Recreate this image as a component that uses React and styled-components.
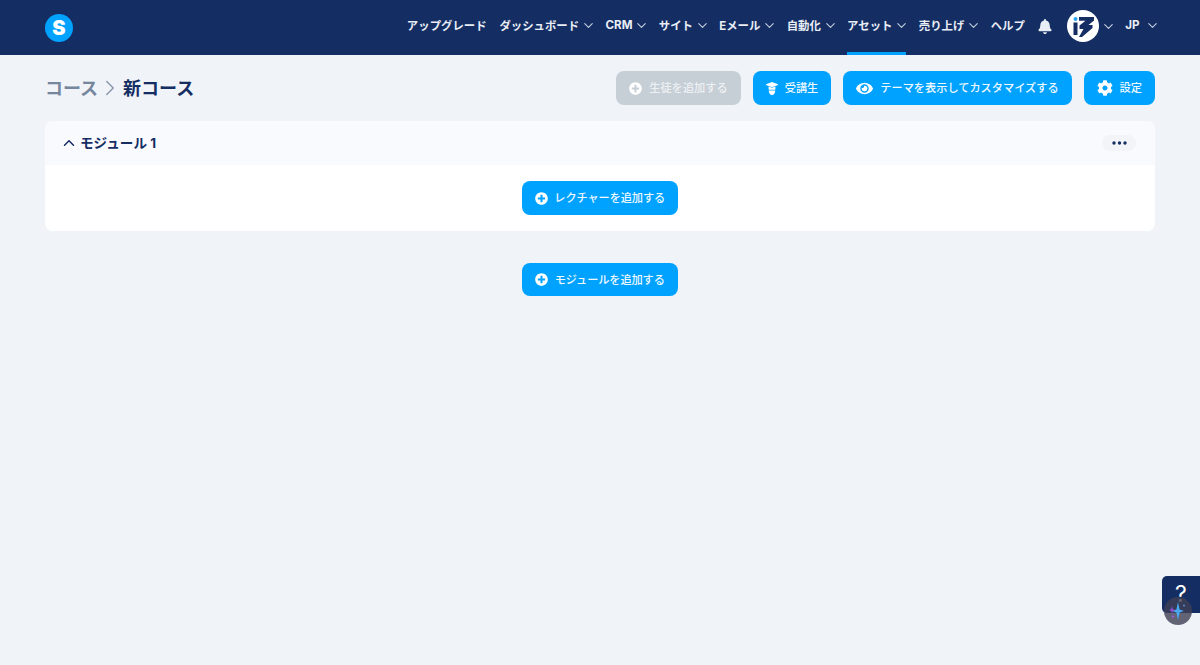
import React from "react";
import styled, { createGlobalStyle } from "styled-components";
import { ChevronDown, ChevronUp, ChevronRight } from "lucide-react";
import { FaBell, FaPlusCircle, FaEye, FaCog } from "react-icons/fa";

const Global = createGlobalStyle`
  html, body { margin: 0; padding: 0; height: 100%; background: #f0f4f9; }
  body { font-family: Inter, "Noto Sans CJK JP", sans-serif; overflow: hidden; }
`;

const Page = styled.div`
  height: 665px;
  position: relative;
  overflow: hidden;
`;

const TopBar = styled.header`
  height: 55px;
  background: #142d63;
  display: flex;
  align-items: center;
  justify-content: space-between;
  padding: 0 44px 0 45px;
`;

const Logo = styled.div`
  width: 28px;
  height: 28px;
  border-radius: 50%;
  background: #00a2ff;
  color: #fff;
  font: 900 20px/28px Inter, sans-serif;
  text-align: center;
`;

const Menu = styled.nav`
  display: flex;
  align-items: center;
  height: 55px;
  gap: 12.8px;
`;

const MenuItem = styled.div`
  height: 55px;
  box-sizing: border-box;
  padding-bottom: 5px;
  display: flex;
  align-items: center;
  gap: 5px;
  color: #e9eef6;
  font-size: ${(p) => (p.$latin ? 11.6 : 11.4)}px;
  font-weight: 700;
  white-space: nowrap;
  box-shadow: ${(p) => (p.$active ? "inset 0 -3px 0 #00a2ff" : "none")};
`;

const Caret = styled(ChevronDown)`
  width: 15px;
  height: 15px;
  margin: 1px -3.5px 0 ${(p) => p.$left ?? -3}px;
  color: #c3cedf;
  stroke-width: 1.8;
`;

const Bell = styled(FaBell)`
  width: 14px;
  height: 15px;
  color: #e9eef6;
  display: block;
  margin-bottom: 3px;
`;

const AvatarRow = styled.div`
  display: flex;
  align-items: center;
  gap: 5px;
  margin: 0 0 3px 2.5px;
`;

const Avatar = styled.svg`
  width: 32px;
  height: 32px;
  display: block;
`;

const Main = styled.main`
  padding: 16px 45px 0;
`;

const TitleRow = styled.div`
  display: flex;
  align-items: center;
  justify-content: space-between;
  height: 34px;
`;

const Crumbs = styled.div`
  display: flex;
  align-items: center;
  height: 34px;
  font-size: 18px;
  font-weight: 700;
`;

const CrumbLink = styled.span`
  color: #76869d;
  margin-top: -3px;
`;

const CrumbCurrent = styled.span`
  color: #142d63;
  margin-top: -3px;
`;

const CrumbArrow = styled(ChevronRight)`
  width: 26px;
  height: 26px;
  margin-left: -1px;
  color: #8897ab;
  stroke-width: 1.3;
`;

const Actions = styled.div`
  display: flex;
  gap: 12px;
`;

const Button = styled.button`
  height: ${(p) => p.$h || 34}px;
  padding: 0 13px 2px;
  border: 0;
  border-radius: 8px;
  background: ${(p) => (p.$disabled ? "#c6ced6" : "#00a2ff")};
  color: ${(p) => (p.$disabled ? "#eef1f4" : "#eef8ff")};
  display: inline-flex;
  align-items: center;
  gap: ${(p) => p.$gap || 7}px;
  font-family: inherit;
  font-size: 11.2px;
  font-weight: 500;
  letter-spacing: ${(p) => (p.$tight ? "-0.1px" : "0")};
  white-space: nowrap;
  svg { color: #fff; flex: none; margin-top: 2px; }
`;

const Module = styled.section`
  margin-top: 16px;
  border-radius: 8px;
  overflow: hidden;
  background: #fff;
`;

const ModuleHead = styled.div`
  height: 44px;
  background: #f9fafd;
  display: flex;
  align-items: center;
  padding: 0 19px 0 15px;
  gap: 2px;
`;

const ModuleTitle = styled.div`
  flex: 1;
  color: #142d63;
  font-size: 13.6px;
  font-weight: 700;
  margin-top: -3px;
`;

const Toggle = styled(ChevronUp)`
  width: 18px;
  height: 18px;
  color: #142d63;
  stroke-width: 2;
`;

const More = styled.div`
  width: 34px;
  height: 16px;
  border-radius: 8px;
  background: #f3f4f7;
  display: flex;
  align-items: center;
  justify-content: center;
`;

const Dots = styled.svg`
  width: 15px;
  height: 4px;
  display: block;
`;

const ModuleBody = styled.div`
  height: 66px;
  display: flex;
  align-items: center;
  justify-content: center;
`;

const AddModule = styled.div`
  margin-top: 32px;
  display: flex;
  justify-content: center;
`;

const HelpTab = styled.div`
  position: absolute;
  right: 0;
  top: 576px;
  width: 38px;
  height: 37px;
  background: #142d63;
  border-radius: 5px 0 0 5px;
  color: #fff;
  font: 400 23px/37px Inter, sans-serif;
  text-align: center;
`;

const Assistant = styled.div`
  position: absolute;
  left: 1164px;
  top: 597px;
  width: 28px;
  height: 28px;
  border-radius: 50%;
  background: rgba(62, 62, 84, 0.8);
  display: flex;
  align-items: center;
  justify-content: center;
`;

const Spark = styled.svg`
  width: 28px;
  height: 28px;
  display: block;
`;

const items = [
  ["アップグレード"],
  ["ダッシュボード", true],
  ["CRM", true, false, true],
  ["サイト", true],
  ["Eメール", true],
  ["自動化", true],
  ["アセット", true, true],
  ["売り上げ", true],
  ["ヘルプ"],
];

const Plus = () => <FaPlusCircle size={13} />;

export default function App() {
  return (
    <Page>
      <Global />
      <TopBar>
        <Logo>S</Logo>
        <Menu>
          {items.map(([label, caret, active, latin]) => (
            <MenuItem key={label} $active={active} $latin={latin}>
              {label}
              {caret && <Caret />}
            </MenuItem>
          ))}
          <Bell />
          <AvatarRow>
            <Avatar viewBox="0 0 32 32">
              <circle cx="16" cy="16" r="16" fill="#fff" />
              <circle cx="8.5" cy="9" r="2" fill="#2aa5f5" />
              <rect x="6.5" y="12.5" width="4" height="12.5" fill="#142d63" />
              <path d="M12 7H27V10.5L21.5 15H25.5V18L15 27H12L16.5 19H12.5V15.5L18.5 10.8H12Z" fill="#142d63" />
            </Avatar>
            <Caret />
          </AvatarRow>
          <MenuItem $latin>
            JP
            <Caret $left={0} />
          </MenuItem>
        </Menu>
      </TopBar>
      <Main>
        <TitleRow>
          <Crumbs>
            <CrumbLink>コース</CrumbLink>
            <CrumbArrow />
            <CrumbCurrent>新コース</CrumbCurrent>
          </Crumbs>
          <Actions>
            <Button $disabled>
              <Plus />
              生徒を追加する
            </Button>
            <Button>
              <svg width="12" height="13" viewBox="0 0 12 13" fill="currentColor">
                <path d="M6 0L12 2.3V3L6 5.3L0 3V2.3Z" />
                <path d="M2.6 4.4L6 5.8L9.4 4.4V6.5C9.4 7 9.3 7.4 9.2 7.7H2.8C2.7 7.4 2.6 7 2.6 6.5Z" />
                <path d="M2.7 8.5H9.3C9.2 11 7.8 13 6 13C4.2 13 2.8 11 2.7 8.5Z" />
              </svg>
              受講生
            </Button>
            <Button>
              <FaEye size={17} />
              テーマを表示してカスタマイズする
            </Button>
            <Button>
              <FaCog size={16} />
              設定
            </Button>
          </Actions>
        </TitleRow>
        <Module>
          <ModuleHead>
            <Toggle />
            <ModuleTitle>モジュール 1</ModuleTitle>
            <More>
              <Dots viewBox="0 0 15 4" fill="#142d63">
                <circle cx="2" cy="2" r="1.7" />
                <circle cx="7.5" cy="2" r="1.7" />
                <circle cx="13" cy="2" r="1.7" />
              </Dots>
            </More>
          </ModuleHead>
          <ModuleBody>
            <Button $tight $gap={6.5}>
              <Plus />
              レクチャーを追加する
            </Button>
          </ModuleBody>
        </Module>
        <AddModule>
          <Button $h={33} $tight $gap={6.5}>
            <Plus />
            モジュールを追加する
          </Button>
        </AddModule>
      </Main>
      <HelpTab>?</HelpTab>
      <Assistant>
        <Spark viewBox="0 0 28 28">
          <path d="M14 5L15.6 12.4L20 14L15.6 15.6L14 23L12.4 15.6L8 14L12.4 12.4Z" fill="#4aa8ee" />
          <path d="M8 9L8.8 12L11 13L8.8 14L8 17L7.2 14L5 13L7.2 12Z" fill="#8f4fd0" />
          <path d="M9 17L9.5 19L11 19.5L9.5 20L9 22L8.5 20L7 19.5L8.5 19Z" fill="#a05ad8" />
          <circle cx="20" cy="8.5" r="1" fill="#5b8fd8" />
        </Spark>
      </Assistant>
    </Page>
  );
}
